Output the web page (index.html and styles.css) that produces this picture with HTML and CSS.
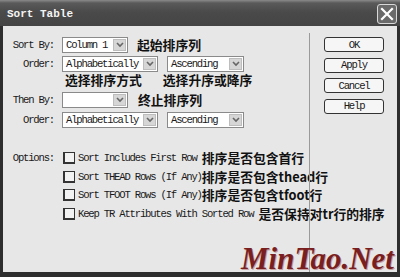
FILE: index.html
```html
<!DOCTYPE html>
<html>
<head>
<meta charset="utf-8">
<link rel="stylesheet" href="styles.css">
</head>
<body>
<div class="win">
  <div class="title">
    <span class="title-text">Sort Table</span>
    <span class="close"><svg width="14" height="14" viewBox="0 0 14 14"><path d="M2 2 L12 12 M12 2 L2 12" stroke="#fff" stroke-width="2.2" stroke-linecap="square"/></svg></span>
  </div>
  <div class="body">
    <div class="main">
      <div class="row r1">
        <span class="lbl">Sort By:</span>
        <span class="sel w-short">Column 1<i class="arr"><svg width="8" height="6" viewBox="0 0 8 6"><path d="M1 1 L4 4 L7 1" fill="none" stroke="#666" stroke-width="1.6"/></svg></i></span>
        <span class="cn c-start">起始排序列</span>
      </div>
      <div class="row r2">
        <span class="lbl">Order:</span>
        <span class="sel w-long">Alphabetically<i class="arr"><svg width="8" height="6" viewBox="0 0 8 6"><path d="M1 1 L4 4 L7 1" fill="none" stroke="#666" stroke-width="1.6"/></svg></i></span>
        <span class="sel w-mid">Ascending<i class="arr"><svg width="8" height="6" viewBox="0 0 8 6"><path d="M1 1 L4 4 L7 1" fill="none" stroke="#666" stroke-width="1.6"/></svg></i></span>
      </div>
      <div class="row note">
        <span class="cn n1">选择排序方式</span>
        <span class="cn n2">选择升序或降序</span>
      </div>
      <div class="row r3">
        <span class="lbl">Then By:</span>
        <span class="sel w-short"><i class="arr"><svg width="8" height="6" viewBox="0 0 8 6"><path d="M1 1 L4 4 L7 1" fill="none" stroke="#666" stroke-width="1.6"/></svg></i></span>
        <span class="cn c-end">终止排序列</span>
      </div>
      <div class="row r4">
        <span class="lbl">Order:</span>
        <span class="sel w-long">Alphabetically<i class="arr"><svg width="8" height="6" viewBox="0 0 8 6"><path d="M1 1 L4 4 L7 1" fill="none" stroke="#666" stroke-width="1.6"/></svg></i></span>
        <span class="sel w-mid">Ascending<i class="arr"><svg width="8" height="6" viewBox="0 0 8 6"><path d="M1 1 L4 4 L7 1" fill="none" stroke="#666" stroke-width="1.6"/></svg></i></span>
      </div>
      <div class="opts">
        <span class="lbl">Options:</span>
        <div class="opt-list">
          <div class="opt"><span class="cb"></span><span class="en">Sort Includes First Row </span><span class="cn">排序是否包含首行</span></div>
          <div class="opt"><span class="cb"></span><span class="en">Sort THEAD Rows (If Any)</span><span class="cn">排序是否包含thead行</span></div>
          <div class="opt"><span class="cb"></span><span class="en">Sort TFOOT Rows (If Any)</span><span class="cn">排序是否包含tfoot行</span></div>
          <div class="opt"><span class="cb"></span><span class="en">Keep TR Attributes With Sorted Row </span><span class="cn">是否保持对tr行的排序</span></div>
        </div>
      </div>
    </div>
    <div class="sep"></div>
    <div class="btns">
      <span class="btn">OK</span>
      <span class="btn">Apply</span>
      <span class="btn">Cancel</span>
      <span class="btn">Help</span>
    </div>
  </div>
  <div class="mark">MinTao.Net</div>
</div>
</body>
</html>
```
FILE: styles.css
```css
* { box-sizing: border-box; }
html, body { margin: 0; padding: 0; background: #3a3a3a; }
.win {
  position: relative;
  width: 400px;
  height: 277px;
  background: #2e2e2e;
  display: flex;
  flex-direction: column;
  overflow: hidden;
}
.title {
  height: 26px;
  flex: none;
  background: linear-gradient(#8a8a8a 0, #5a5a5a 3px, #4a4a4a 12px, #444 26px);
  display: flex;
  align-items: center;
  padding: 0 3px 0 7px;
  justify-content: space-between;
}
.title-text {
  font-family: "Liberation Mono", monospace;
  font-weight: bold;
  font-size: 11px;
  color: #f4f4f4;
  margin-top: 1px;
}
.close {
  width: 20px;
  height: 20px;
  border: 1px solid #d8d8d8;
  border-radius: 3px;
  background: #6a6a6a;
  display: flex;
  align-items: center;
  justify-content: center;
  margin-top: 2px;
}
.body {
  flex: 1;
  margin: 0 3px 5px 3px;
  background: #e7e7e7;
  display: flex;
  font-family: "Liberation Mono", monospace;
  font-size: 10.6px;
  letter-spacing: -1.2px;
  color: #1a1a1a;
}
.main {
  width: 306px;
  padding-top: 11px;
  display: flex;
  flex-direction: column;
}
.row {
  display: flex;
  align-items: center;
  height: 16px;
}
.r2 { margin-top: 3px; }
.note { height: 16px; }
.r3 { margin-top: 4px; }
.r4 { margin-top: 4px; }
.lbl {
  width: 51px;
  text-align: right;
  margin-right: 8px;
  flex: none;
}
.sel {
  position: relative;
  height: 16px;
  background: #fff;
  border: 1px solid #8a8a8a;
  display: flex;
  align-items: center;
  padding-left: 3px;
  flex: none;
}
.w-short { width: 66px; }
.w-long { width: 96px; margin-right: 9px; }
.w-mid { width: 77px; }
.arr {
  position: absolute;
  right: 1px;
  top: 1px;
  width: 13px;
  height: 12px;
  background: #d6d6d6;
  border: 1px solid #bdbdbd;
  display: flex;
  align-items: center;
  justify-content: center;
}
.cn {
  font-family: "Noto Sans CJK SC", sans-serif;
  font-weight: bold;
  font-size: 12.8px;
  letter-spacing: 0;
  color: #111;
  line-height: 14px;
}
.c-start { margin-left: 9px; }
.c-end { margin-left: 10px; }
.n1 { margin-left: 62px; }
.n2 { margin-left: 21px; }
.opts {
  display: flex;
  margin-top: 24px;
  align-items: flex-start;
}
.opts .lbl { line-height: 12px; }
.opt-list {
  display: flex;
  flex-direction: column;
  gap: 6.7px;
  margin-left: 1px;
}
.opt {
  display: flex;
  align-items: center;
  height: 12px;
  white-space: pre;
}
.cb {
  width: 12px;
  height: 12px;
  background: #f2f2f2;
  border: 1px solid #333;
  border-bottom-width: 2px;
  border-left-width: 2px;
  margin-right: 3px;
  flex: none;
}
.sep {
  width: 1px;
  background: #9a9a9a;
  margin-top: 7px;
  flex: none;
}
.btns {
  padding: 11px 0 0 14px;
  display: flex;
  flex-direction: column;
  gap: 5.5px;
}
.btn {
  width: 60px;
  height: 15px;
  border: 1px solid #333;
  border-radius: 3px;
  background: #f6f6f6;
  display: flex;
  align-items: center;
  justify-content: center;
}
.mark {
  position: absolute;
  right: 6px;
  bottom: 3px;
  font-family: "Liberation Serif", serif;
  font-style: italic;
  font-weight: bold;
  font-size: 31px;
  color: #7a1f1f;
  text-shadow: 1px 1px 0 #c9a0a0;
  line-height: 1;
}
```
